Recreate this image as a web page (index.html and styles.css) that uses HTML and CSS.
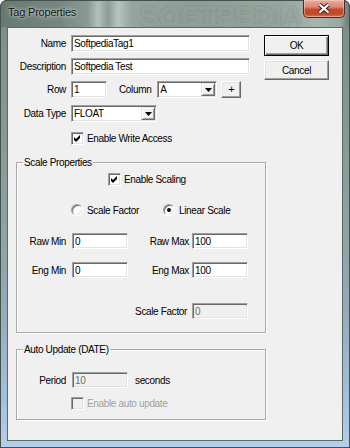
FILE: index.html
```html
<!DOCTYPE html>
<html>
<head>
<meta charset="utf-8">
<title>Tag Properties</title>
<link rel="stylesheet" href="styles.css">
</head>
<body>
<div class="window">
  <div class="titlebar">
    <span class="title">Tag Properties</span>
    <span class="watermark">SOFTPEDIA</span>
    <div class="close">
      <svg width="14" height="11" viewBox="0 0 14 11"><path d="M2.5 1.5 L11.5 9.5 M11.5 1.5 L2.5 9.5" stroke="#3a2622" stroke-width="4.2" fill="none"/><path d="M2.5 1.5 L11.5 9.5 M11.5 1.5 L2.5 9.5" stroke="#fff" stroke-width="2.2" fill="none"/></svg>
    </div>
  </div>
  <div class="client">
    <div class="top">
      <div class="form">
        <div class="row">
          <span class="lbl">Name</span>
          <div class="edit w178">SoftpediaTag1</div>
        </div>
        <div class="row gap6">
          <span class="lbl">Description</span>
          <div class="edit w178">Softpedia Test</div>
        </div>
        <div class="row gap6">
          <span class="lbl">Row</span>
          <div class="edit w36">1</div>
          <span class="col-lbl">Column</span>
          <div class="combo w60"><span class="val">A</span><span class="drop"><svg width="7" height="4" viewBox="0 0 7 4"><path d="M0 0 H7 L3.5 4 Z" fill="#000"/></svg></span></div>
          <div class="plus">+</div>
        </div>
        <div class="row gap7">
          <span class="lbl">Data Type</span>
          <div class="combo w86"><span class="val">FLOAT</span><span class="drop"><svg width="7" height="4" viewBox="0 0 7 4"><path d="M0 0 H7 L3.5 4 Z" fill="#000"/></svg></span></div>
        </div>
        <div class="check-row wa">
          <span class="cb"><svg width="7" height="7" viewBox="0 0 7 7"><path d="M0 2 L2 4 L6 0 L6 3 L2 7 L0 5 Z" fill="#000"/></svg></span>
          <span class="cb-text">Enable Write Access</span>
        </div>
      </div>
      <div class="buttons">
        <div class="btn default">OK</div>
        <div class="btn cancel">Cancel</div>
      </div>
    </div>

    <div class="group g-scale">
      <span class="gtitle">Scale Properties</span>
      <div class="check-row es">
        <span class="cb"><svg width="7" height="7" viewBox="0 0 7 7"><path d="M0 2 L2 4 L6 0 L6 3 L2 7 L0 5 Z" fill="#000"/></svg></span>
        <span class="cb-text">Enable Scaling</span>
      </div>
      <div class="radio-row">
        <div class="radio-item first"><span class="radio"></span><span class="cb-text">Scale Factor</span></div>
        <div class="radio-item"><span class="radio on"></span><span class="cb-text">Linear Scale</span></div>
      </div>
      <div class="grow raw">
        <span class="glbl">Raw Min</span>
        <div class="edit w56">0</div>
        <span class="glbl2">Raw Max</span>
        <div class="edit w56">100</div>
      </div>
      <div class="grow eng">
        <span class="glbl">Eng Min</span>
        <div class="edit w56">0</div>
        <span class="glbl2">Eng Max</span>
        <div class="edit w56">100</div>
      </div>
      <div class="grow sf">
        <span class="glbl3">Scale Factor</span>
        <div class="edit w56 disabled">0</div>
      </div>
    </div>

    <div class="group g-auto">
      <span class="gtitle">Auto Update (DATE)</span>
      <div class="grow period">
        <span class="glbl">Period</span>
        <div class="edit w56 disabled">10</div>
        <span class="unit">seconds</span>
      </div>
      <div class="check-row au">
        <span class="cb off"></span>
        <span class="cb-text dis">Enable auto update</span>
      </div>
    </div>
  </div>
</div>
</body>
</html>
```
FILE: styles.css
```css
* { box-sizing: border-box; }
html, body { margin: 0; padding: 0; }
body {
  width: 350px;
  height: 448px;
  overflow: hidden;
  background: #ffffff;
  font-family: "Liberation Sans", Arial, sans-serif;
  font-size: 10px;
  letter-spacing: -0.35px;
  color: #000;
}

.window {
  position: relative;
  width: 350px;
  height: 448px;
  padding: 0 7px 7px;
  display: flex;
  flex-direction: column;
  border-radius: 7px 7px 0 0;
  background: linear-gradient(180deg, #74867e 0px, #7e918a 40px, #889c98 160px, #93a9b4 300px, #a5c0dd 400px, #b6cfea 448px);
  box-shadow: inset 0 0 0 1px #44524d;
  overflow: hidden;
}

.titlebar {
  position: relative;
  height: 27px;
  margin: 0 -7px;
  padding: 0 6px 0 8px;
  display: flex;
  align-items: flex-start;
  border-radius: 7px 7px 0 0;
  background: linear-gradient(90deg, #66786f 0px, #75877f 60px, #8a9b93 88px, #b2c0b9 98px, #8c9d95 108px, #b7c4bd 118px, #94a59d 132px, #8d9f97 200px, #95a79f 280px, #a6b5ae 318px, #98a9a1 340px, #66786f 350px);
  box-shadow: inset 0 1px 0 #44524d, inset 1px 0 0 #44524d, inset -1px 0 0 #44524d;
}
.title {
  position: relative;
  z-index: 2;
  margin-top: 6px;
  font-size: 11px;
  letter-spacing: -0.2px;
  color: #111;
  text-shadow: 0 0 5px rgba(235, 240, 238, 0.9), 0 0 2px rgba(235, 240, 238, 0.7);
}
.watermark {
  position: absolute;
  left: 140px;
  top: 2px;
  font-weight: bold;
  font-size: 27px;
  letter-spacing: 1px;
  color: rgba(210, 225, 220, 0.24);
  text-shadow: 0 0 3px rgba(60, 80, 72, 0.3);
}
.close {
  position: relative;
  z-index: 2;
  margin-left: auto;
  margin-right: -1px;
  width: 42px;
  height: 18px;
  display: flex;
  align-items: center;
  justify-content: center;
  border: 1px solid #4e2a24;
  border-top: none;
  border-radius: 0 0 5px 5px;
  background: linear-gradient(180deg, #e7aa9e 0%, #dc8a76 40%, #c84a2e 55%, #c5472a 80%, #d7704f 100%);
  box-shadow: inset 0 0 0 1px rgba(255, 220, 210, 0.45);
}

.client {
  position: relative;
  flex: 1;
  background: #f0f0f0;
  border: 1px solid #596a67;
  display: flex;
  flex-direction: column;
}

.top {
  position: relative;
  height: 134px;
  display: flex;
}
.form {
  padding-top: 7px;
}
.row {
  display: flex;
  align-items: center;
  height: 17px;
}
.gap6 { margin-top: 6px; }
.gap7 { margin-top: 7px; }
.lbl {
  width: 58px;
  margin-right: 5px;
  text-align: right;
  flex-shrink: 0;
  white-space: nowrap;
}
.col-lbl { margin-left: 12px; margin-right: 6px; white-space: nowrap; }

.edit {
  height: 17px;
  background: #fff;
  border: 1px solid;
  border-color: #a0a0a0 #ffffff #ffffff #a0a0a0;
  box-shadow: inset 1px 1px 0 #696969, inset -1px -1px 0 #e3e3e3;
  padding: 0 2px;
  display: flex;
  align-items: center;
  white-space: nowrap;
  flex-shrink: 0;
}
.edit.disabled { background: #f0f0f0; color: #6d6d6d; }
.w178 { width: 179px; }
.w36 { width: 36px; }
.w56 { width: 56px; height: 16px; }
.w60 { width: 60px; }
.w86 { width: 86px; }

.combo {
  height: 17px;
  background: #fff;
  border: 1px solid;
  border-color: #a0a0a0 #ffffff #ffffff #a0a0a0;
  box-shadow: inset 1px 1px 0 #696969, inset -1px -1px 0 #e3e3e3;
  padding: 1px 1px 1px 2px;
  display: flex;
  align-items: stretch;
  flex-shrink: 0;
}
.combo .val { flex: 1; display: flex; align-items: center; }
.drop {
  width: 14px;
  background: #f0f0f0;
  border: 1px solid;
  border-color: #e3e3e3 #696969 #696969 #e3e3e3;
  box-shadow: inset 1px 1px 0 #fff, inset -1px -1px 0 #a0a0a0;
  display: flex;
  align-items: center;
  justify-content: center;
}
.plus {
  margin-left: 4px;
  width: 20px;
  height: 17px;
  margin-top: -1px;
  background: #f0f0f0;
  border: 1px solid;
  border-color: #fff #696969 #696969 #fff;
  box-shadow: inset -1px -1px 0 #a0a0a0, inset 1px 1px 0 #e3e3e3;
  display: flex;
  align-items: center;
  justify-content: center;
  font-size: 11px;
  line-height: 1;
}

.check-row {
  display: flex;
  align-items: center;
  height: 13px;
}
.check-row.wa { margin-top: 10px; padding-left: 63px; }
.cb {
  width: 13px;
  height: 13px;
  background: #fff;
  border: 1px solid;
  border-color: #a0a0a0 #ffffff #ffffff #a0a0a0;
  box-shadow: inset 1px 1px 0 #696969, inset -1px -1px 0 #e3e3e3;
  display: flex;
  align-items: center;
  justify-content: center;
  flex-shrink: 0;
}
.cb.off { background: #f0f0f0; }
.cb-text { margin-left: 3px; white-space: nowrap; }
.cb-text.dis { color: #a0a0a0; }

.buttons {
  margin-left: auto;
  margin-right: 13px;
  padding-top: 7px;
}
.btn {
  width: 65px;
  height: 20px;
  background: #f0f0f0;
  border: 1px solid;
  border-color: #fff #696969 #696969 #fff;
  box-shadow: inset -1px -1px 0 #a0a0a0, inset 1px 1px 0 #e3e3e3;
  display: flex;
  align-items: center;
  justify-content: center;
}
.btn.default {
  height: 21px;
  border-color: #000;
  box-shadow: inset 1px 1px 0 #fff, inset -1px -1px 0 #696969, inset -2px -2px 0 #a0a0a0;
}
.btn.cancel { margin-top: 4px; }

.group {
  position: relative;
  margin-left: 8px;
  width: 250px;
  border: 1px solid #a9a9a9;
  box-shadow: inset 1px 1px 0 #fff, 1px 1px 0 #fff;
}
.g-scale { height: 171px; }
.g-auto { height: 71px; margin-top: 16px; }
.gtitle {
  position: absolute;
  left: 6px;
  top: -7px;
  line-height: 13px;
  padding: 0 1px;
  background: #f0f0f0;
  white-space: nowrap;
}
.check-row.es { margin-top: 10px; padding-left: 91px; }
.radio-row {
  margin-top: 18px;
  padding-left: 54px;
  display: flex;
  align-items: center;
  height: 12px;
}
.radio-item { display: flex; align-items: center; }
.radio-item.first { width: 92px; }
.radio-item .cb-text { margin-left: 4px; }
.radio {
  width: 12px;
  height: 12px;
  border-radius: 50%;
  background: #fff;
  border: 1px solid;
  border-color: #a0a0a0 #ffffff #ffffff #a0a0a0;
  box-shadow: inset 1px 1px 0 #696969, inset -1px -1px 0 #e3e3e3;
  display: flex;
  align-items: center;
  justify-content: center;
  flex-shrink: 0;
}
.radio.on::after {
  content: "";
  width: 4px;
  height: 4px;
  border-radius: 50%;
  background: #000;
}
.grow {
  display: flex;
  align-items: center;
  height: 16px;
}
.grow.raw { margin-top: 17px; }
.grow.eng { margin-top: 13px; }
.grow.sf { margin-top: 25px; padding-left: 111px; }
.glbl { width: 49px; margin-right: 6px; text-align: right; flex-shrink: 0; white-space: nowrap; }
.glbl2 { width: 61px; margin-right: 3px; text-align: right; flex-shrink: 0; white-space: nowrap; }
.glbl3 { width: 59px; margin-right: 5px; text-align: right; flex-shrink: 0; white-space: nowrap; }
.grow.period { margin-top: 22px; }
.unit { margin-left: 7px; white-space: nowrap; }
.check-row.au { margin-top: 9px; padding-left: 54px; }
```
